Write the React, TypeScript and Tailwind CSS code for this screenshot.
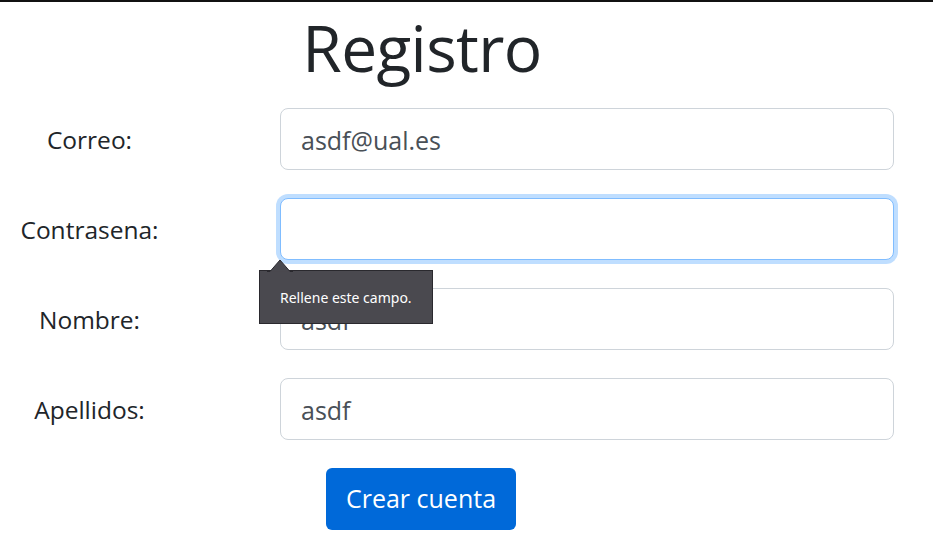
import React from 'react';

const FONT = "font-['Open_Sans',sans-serif]";

function Row({ label, value, focused }: { label: string; value?: string; focused?: boolean }) {
  return (
    <div className="flex items-center h-[62px]">
      <label className="w-[179px] text-center text-[24.5px] text-[#212529] pt-[3px]">{label}</label>
      <div className="ml-[101px] w-[614px]">
        <input
          readOnly
          value={value ?? ''}
          className={`w-full h-[62px] px-[20px] pt-[2px] text-[25px] text-[#495057] bg-white rounded-lg outline-none ${
            focused
              ? 'border border-[#80bdff] shadow-[0_0_0_4px_rgba(0,123,255,0.25)]'
              : 'border border-[#ced4da]'
          }`}
        />
      </div>
    </div>
  );
}

export default function App() {
  return (
    <div className={`${FONT} relative w-[933px] h-[558px] bg-white border-t-2 border-[#111]`}>
      <div className="w-[844px] flex justify-center pt-[2px] h-[106px]">
        <h1 className="text-[64px] leading-[88px] text-[#212529] tracking-[-0.6px]">Registro</h1>
      </div>
      <div className="flex flex-col gap-[28px]">
        <Row label="Correo:" value="asdf@ual.es" />
        <Row label="Contrasena:" focused />
        <Row label="Nombre:" value="asdf" />
        <Row label="Apellidos:" value="asdf" />
      </div>
      <div className="w-[842px] flex justify-center mt-[28px]">
        <button className="h-[62px] w-[190px] rounded-md bg-[#0069d9] text-white text-[25px]">Crear cuenta</button>
      </div>

      <div className="absolute left-[259px] top-[268px]">
        <svg className="absolute left-[8px] -top-[11px]" width="26" height="13" viewBox="0 0 26 13">
          <path d="M0 12.5 L3 12.5 L13 1 L23 12.5 L26 12.5" fill="#4a494f" stroke="#2a292e" strokeWidth="1" />
        </svg>
        <div className="w-[174px] h-[54px] bg-[#4a494f] border border-[#2a292e] flex items-center pl-[20px] text-[14px] text-white font-['Noto_Sans',sans-serif]">
          Rellene este campo.
        </div>
      </div>
    </div>
  );
}
